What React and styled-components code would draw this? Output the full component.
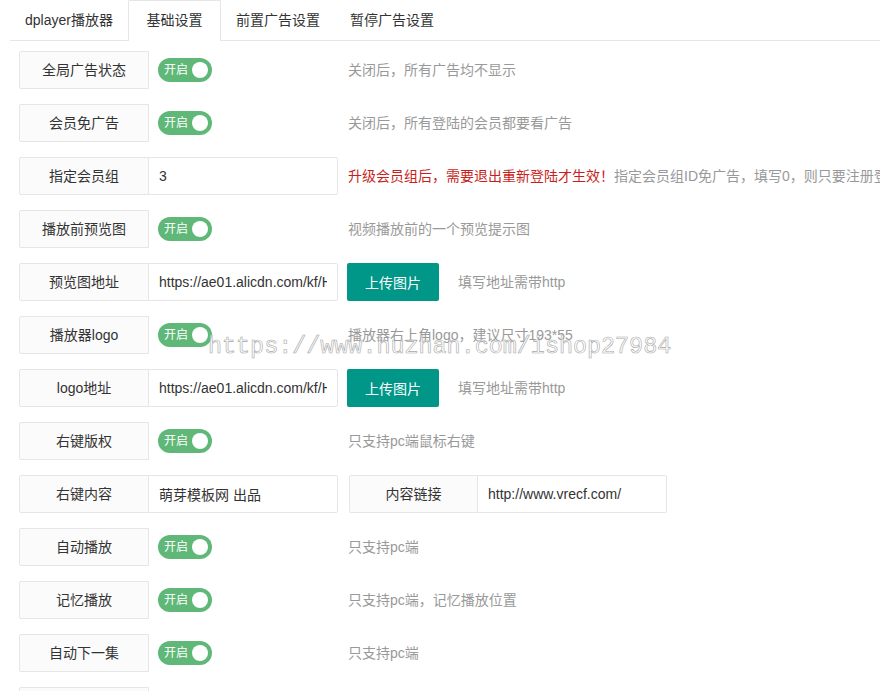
import styled, { createGlobalStyle, css } from 'styled-components';

const GlobalStyle = createGlobalStyle`
  html, body {
    margin: 0;
    padding: 0;
    background: #fff;
    overflow: hidden;
  }
  body {
    font-family: "Liberation Sans", "Noto Sans CJK SC", sans-serif;
    font-size: 14px;
    color: #333;
  }
`

const Page = styled.div`
  position: relative;
  padding-left: 10px;
  width: 870px;
`

const TabTitle = styled.ul`
  display: flex;
  align-items: flex-start;
  height: 40px;
  margin: 0;
  padding: 0;
  list-style: none;
  border-bottom: 1px solid #e6e6e6;
`

const Tab = styled.li`
  box-sizing: border-box;
  height: 40px;
  line-height: 40px;
  min-width: 93px;
  padding: 0 15px;
  text-align: center;
  white-space: nowrap;
  color: #333;
  cursor: pointer;

  ${({ $active }) => $active && css`
    height: 41px;
    background: #fff;
    border-radius: 2px 2px 0 0;
    box-shadow: inset 1px 0 #e6e6e6, inset -1px 0 #e6e6e6, inset 0 1px #e6e6e6;
  `}
`

const TabContent = styled.div`
  padding-top: 10px;
`

const FormItem = styled.div`
  display: flex;
  align-items: center;
  height: 38px;
  margin: 0 0 15px 9px;
  white-space: nowrap;
`

const Label = styled.div`
  box-sizing: border-box;
  flex-shrink: 0;
  width: ${({ $w }) => $w || 130}px;
  height: 38px;
  line-height: 36px;
  border: 1px solid #e6e6e6;
  border-radius: 2px 0 0 2px;
  background: #fbfbfb;
  text-align: center;
  margin-left: ${({ $ml }) => $ml || 0}px;
`

const Input = styled.input`
  box-sizing: border-box;
  flex-shrink: 0;
  width: 190px;
  height: 38px;
  margin: 0 0 0 -1px;
  padding: 0 10px;
  border: 1px solid #e6e6e6;
  border-radius: 0 2px 2px 0;
  background: #fff;
  font-family: inherit;
  font-size: 14px;
  color: #333;
  outline: none;
`

const SwitchHolder = styled.div`
  box-sizing: border-box;
  flex-shrink: 0;
  width: 190px;
  margin-left: -1px;
  padding-left: 10px;
  display: flex;
  align-items: center;
`

const Switch = styled.div`
  box-sizing: border-box;
  display: flex;
  align-items: center;
  gap: 4px;
  width: 54px;
  height: 24px;
  padding: 0 4px 0 6px;
  border-radius: 20px;
  background: #5fb878;
  color: #fff;
  font-size: 12px;
  line-height: 24px;
`

const Knob = styled.span`
  width: 16px;
  height: 16px;
  border-radius: 50%;
  background: #fff;
`

const UploadButton = styled.button`
  flex-shrink: 0;
  width: 92px;
  height: 38px;
  margin-left: 9px;
  border: none;
  border-radius: 2px;
  background: #009688;
  color: #fff;
  font-family: inherit;
  font-size: 14px;
  padding: 0;
`

const Help = styled.div`
  margin-left: ${({ $ml }) => $ml ?? 10}px;
  line-height: 38px;
  color: #999;
  white-space: nowrap;
`

const Warn = styled.span`
  color: #c81f1c;
`

const Watermark = styled.div`
  position: absolute;
  left: 208px;
  top: 333px;
  font-family: "Liberation Mono", monospace;
  font-size: 23.4px;
  line-height: 28px;
  color: rgba(255, 255, 255, 0.5);
  -webkit-text-stroke: 0.6px #a8a8a8;
  pointer-events: none;
  white-space: nowrap;
`

const LOGO_URL = 'https://ae01.alicdn.com/kf/H8d2c6e0b7a4f4c1e9b3a5d7f1e2c4b6aX.png';

const switchRows = {
  top: [
    ['全局广告状态', '关闭后，所有广告均不显示'],
    ['会员免广告', '关闭后，所有登陆的会员都要看广告'],
  ],
  bottom: [
    ['自动播放', '只支持pc端'],
    ['记忆播放', '只支持pc端，记忆播放位置'],
    ['自动下一集', '只支持pc端'],
  ],
};

function SwitchRow({ label, help }) {
  return (
    <FormItem>
      <Label>{label}</Label>
      <SwitchHolder>
        <Switch>开启<Knob /></Switch>
      </SwitchHolder>
      <Help>{help}</Help>
    </FormItem>
  )
}

function UploadRow({ label, value }) {
  return (
    <FormItem>
      <Label>{label}</Label>
      <Input readOnly value={value} />
      <UploadButton>上传图片</UploadButton>
      <Help $ml={19}>填写地址需带http</Help>
    </FormItem>
  )
}

export default function App() {
  return (
    <Page>
      <GlobalStyle />
      <TabTitle>
        <Tab>dplayer播放器</Tab>
        <Tab $active>基础设置</Tab>
        <Tab>前置广告设置</Tab>
        <Tab>暂停广告设置</Tab>
      </TabTitle>

      <TabContent>
        {switchRows.top.map(([l, h]) => <SwitchRow key={l} label={l} help={h} />)}

        <FormItem>
          <Label>指定会员组</Label>
          <Input readOnly value="3" />
          <Help>
            <Warn>升级会员组后，需要退出重新登陆才生效！</Warn>指定会员组ID免广告，填写0，则只要注册登陆的会员都免广告
          </Help>
        </FormItem>

        <SwitchRow label="播放前预览图" help="视频播放前的一个预览提示图" />
        <UploadRow label="预览图地址" value={LOGO_URL} />
        <SwitchRow label="播放器logo" help="播放器右上角logo，建议尺寸193*55" />
        <UploadRow label="logo地址" value={LOGO_URL} />
        <SwitchRow label="右键版权" help="只支持pc端鼠标右键" />

        <FormItem>
          <Label>右键内容</Label>
          <Input readOnly value="萌芽模板网 出品" />
          <Label $ml={11} $w={129}>内容链接</Label>
          <Input readOnly value="http://www.vrecf.com/" />
        </FormItem>

        {switchRows.bottom.map(([l, h]) => <SwitchRow key={l} label={l} help={h} />)}
        <SwitchRow label="弹幕开关" help="只支持pc端" />
      </TabContent>

      <Watermark>https://www.huzhan.com/ishop27984</Watermark>
    </Page>
  )
}
